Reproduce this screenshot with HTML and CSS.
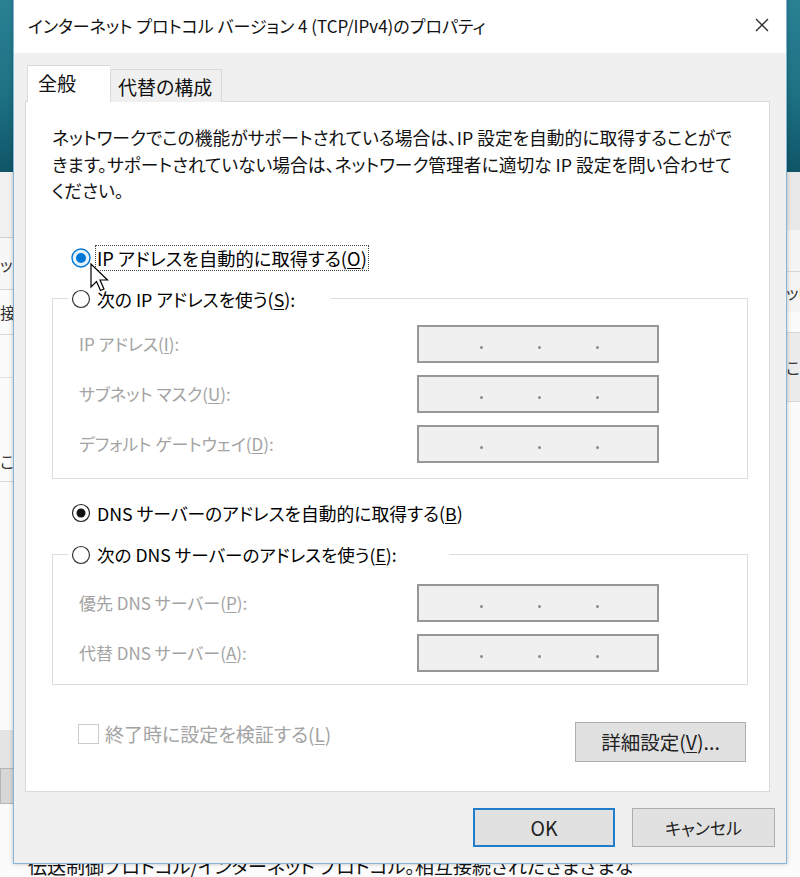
FILE: index.html
```html
<!DOCTYPE html>
<html lang="ja">
<head>
<meta charset="utf-8">
<title>インターネット プロトコル バージョン 4 (TCP/IPv4)のプロパティ</title>
<link rel="stylesheet" href="styles.css">
</head>
<body>
<div class="desktop">
  <div class="wallpaper"></div>
  <div class="backwin">
    <div class="bw-strips">
      <div class="bw-col bw-left">
        <div class="bw-cell c1"></div>
        <div class="bw-cell c2">ッ</div>
        <div class="bw-cell c3">接</div>
        <div class="bw-cell c4"></div>
        <div class="bw-cell c5"></div>
        <div class="bw-cell c6">こ</div>
        <div class="bw-cell c7"></div>
        <div class="bw-cell c8"></div>
        <div class="bw-cell c9"></div>
      </div>
      <div class="bw-col bw-right">
        <div class="bw-cell r1"></div>
        <div class="bw-cell r2"></div>
        <div class="bw-cell r3">ッI</div>
        <div class="bw-cell r4"></div>
        <div class="bw-cell r5">こ</div>
      </div>
    </div>
    <div class="bw-desc">伝送制御プロトコル/インターネット プロトコル。相互接続されたさまざまな</div>
  </div>

  <div class="dialog">
    <div class="titlebar">
      <span class="title">インターネット プロトコル バージョン 4 (TCP/IPv4)のプロパティ</span>
      <span class="close">
        <svg width="14" height="14" viewBox="0 0 14 14"><path d="M1 1 L13 13 M13 1 L1 13" stroke="#2b2b2b" stroke-width="1.3" fill="none"/></svg>
      </span>
    </div>
    <div class="dlg-body">
      <div class="tabs">
        <div class="tab active">全般</div>
        <div class="tab">代替の構成</div>
      </div>
      <div class="panel">
        <p class="desc">ネットワークでこの機能がサポートされている場合は、IP 設定を自動的に取得することがで<br>きます。サポートされていない場合は、ネットワーク管理者に適切な IP 設定を問い合わせて<br>ください。</p>

        <div class="radio-row">
          <svg class="radio" width="20" height="20" viewBox="0 0 20 20"><circle cx="10" cy="10" r="9" fill="#e5f1fb" stroke="#0078d7" stroke-width="1.4"/><circle cx="10" cy="10" r="5" fill="#0078d7"/></svg>
          <span class="focus">IP アドレスを自動的に取得する(<u>O</u>)</span>
        </div>

        <fieldset class="group group-ip">
          <legend class="legend legend-ip">
            <svg class="radio" width="20" height="20" viewBox="0 0 20 20"><circle cx="10" cy="10" r="8.5" fill="#fff" stroke="#333" stroke-width="1.2"/></svg>
            <span>次の IP アドレスを使う(<u>S</u>):</span>
          </legend>
          <div class="fields">
            <span class="flabel">IP アドレス(<u>I</u>):</span>
            <div class="ipbox"><i></i><i></i><i></i></div>
            <span class="flabel">サブネット マスク(<u>U</u>):</span>
            <div class="ipbox"><i></i><i></i><i></i></div>
            <span class="flabel">デフォルト ゲートウェイ(<u>D</u>):</span>
            <div class="ipbox"><i></i><i></i><i></i></div>
          </div>
        </fieldset>

        <div class="radio-row dns-auto">
          <svg class="radio" width="20" height="20" viewBox="0 0 20 20"><circle cx="10" cy="10" r="8.5" fill="#fff" stroke="#222" stroke-width="1.2"/><circle cx="10" cy="10" r="4.5" fill="#111"/></svg>
          <span class="rlabel">DNS サーバーのアドレスを自動的に取得する(<u>B</u>)</span>
        </div>

        <fieldset class="group group-dns">
          <legend class="legend legend-dns">
            <svg class="radio" width="20" height="20" viewBox="0 0 20 20"><circle cx="10" cy="10" r="8.5" fill="#fff" stroke="#333" stroke-width="1.2"/></svg>
            <span>次の DNS サーバーのアドレスを使う(<u>E</u>):</span>
          </legend>
          <div class="fields">
            <span class="flabel">優先 DNS サーバー(<u>P</u>):</span>
            <div class="ipbox"><i></i><i></i><i></i></div>
            <span class="flabel">代替 DNS サーバー(<u>A</u>):</span>
            <div class="ipbox"><i></i><i></i><i></i></div>
          </div>
        </fieldset>

        <div class="bottom-row">
          <div class="check">
            <span class="checkbox"></span>
            <span>終了時に設定を検証する(<u>L</u>)</span>
          </div>
          <div class="btn adv">詳細設定(<u>V</u>)...</div>
        </div>
      </div>
      <div class="footer">
        <div class="btn ok">OK</div>
        <div class="btn cancel">キャンセル</div>
      </div>
    </div>
  </div>

  <svg class="cursor" width="20" height="30" viewBox="0 0 20 30"><path d="M1 1 V24 L6.5 18.5 L10.5 27.5 L14 26 L10 17 H17.5 Z" fill="#fff" stroke="#000" stroke-width="1.2" stroke-linejoin="miter"/></svg>
</div>
</body>
</html>
```

FILE: styles.css
```css
* { box-sizing: border-box; }
html, body { margin: 0; padding: 0; }
body {
  width: 800px;
  height: 877px;
  overflow: hidden;
  font-family: "Noto Sans CJK JP", "Noto Sans", sans-serif;
  font-feature-settings: "palt";
  font-size: 17px;
  color: #000;
}
u { text-decoration: underline; text-underline-offset: 2px; text-decoration-thickness: 1px; }

.desktop {
  position: relative;
  width: 800px;
  height: 877px;
  overflow: hidden;
  background: #fff;
}
.wallpaper {
  height: 172px;
  background: linear-gradient(180deg, #2a8293 0%, #1d7183 55%, #0f5668 100%);
}

/* window behind */
.backwin {
  height: 705px;
  background: #fbfbfb;
  display: flex;
  flex-direction: column;
}
.bw-strips {
  height: 688px;
  display: flex;
  justify-content: space-between;
}
.bw-col {
  width: 14px;
  display: flex;
  flex-direction: column;
  font-size: 16px;
  color: #333;
  overflow: hidden;
}
.bw-right { align-items: flex-end; }
.bw-cell { width: 100%; display: flex; align-items: center; white-space: nowrap; }
.c1 { height: 66px; background: #f1f1f1; border-bottom: 1px solid #cfcfcf; }
.c2 { height: 52px; background: #f7f7f7; border-bottom: 1px solid #d6d6d6; }
.c3 { height: 45px; border-bottom: 1px solid #d6d6d6; }
.c4 { height: 43px; border-bottom: 1px solid #e2e2e2; }
.c5 { height: 62px; }
.c6 { height: 42px; border-bottom: 1px solid #d6d6d6; }
.c7 { height: 248px; }
.c8 { height: 38px; background: #e4e4e4; }
.c9 { height: 36px; background: #d7d7d7; border: 1px solid #b5b5b5; }
.r1 { height: 58px; background: #e9e9e9; }
.r2 { height: 42px; background: #f4f4f4; border-bottom: 1px solid #d6d6d6; }
.r3 { height: 40px; background: #f4f4f4; justify-content: flex-start; }
.r4 { height: 20px; }
.r5 { height: 70px; background: #ececec; border-top: 1px solid #d6d6d6; border-bottom: 1px solid #d6d6d6; }
.bw-desc {
  padding-left: 28px;
  font-size: 19px;
  line-height: 22px;
  white-space: nowrap;
  color: #111;
}

/* dialog */
.dialog {
  position: absolute;
  left: 13px;
  top: -1px;
  width: 774px;
  height: 865px;
  background: #f0f0f0;
  border: 1px solid #86b5da;
  box-shadow: 0 0 4px rgba(0, 0, 0, 0.25);
  display: flex;
  flex-direction: column;
}
.titlebar {
  height: 53px;
  background: #fff;
  display: flex;
  align-items: center;
  justify-content: space-between;
  padding: 0 0 3px 14px;
  flex: none;
}
.title { font-size: 17px; color: #111; white-space: nowrap; }
.close {
  width: 48px;
  height: 40px;
  display: flex;
  align-items: center;
  justify-content: center;
}

.dlg-body {
  flex: 1;
  display: flex;
  flex-direction: column;
  padding: 12px 0 0 11px;
}
.tabs {
  display: flex;
  align-items: flex-end;
  padding-left: 2px;
  height: 37px;
  margin-bottom: -1px;
  position: relative;
  z-index: 1;
}
.tab {
  height: 33px;
  width: 112px;
  padding-left: 7px;
  display: flex;
  align-items: center;
  background: #f0f0f0;
  border: 1px solid #d9d9d9;
  border-bottom: none;
  color: #111;
  font-size: 19px;
}
.tab.active {
  height: 37px;
  width: 83px;
  padding-left: 10px;
  padding-bottom: 4px;
  background: #fff;
  border-right: none;
}
.panel {
  height: 691px;
  margin-right: 16px;
  background: #fff;
  border: 1px solid #d9d9d9;
  padding: 22px 21px 0 26px;
  display: flex;
  flex-direction: column;
  flex: none;
}
.desc {
  margin: 0;
  line-height: 26.5px;
  font-size: 17.75px;
  color: #111;
  white-space: nowrap;
}
.radio-row {
  display: flex;
  align-items: center;
  height: 26px;
  margin-left: 19px;
  margin-top: 41px;
  white-space: nowrap;
}
.radio { flex: none; display: block; }
.radio-row .focus {
  margin-left: 4px;
  padding: 0 1px;
  border: 1px dotted #444;
  line-height: 24px;
  font-size: 18.3px;
}
.rlabel { margin-left: 6px; font-size: 17.8px; }

.group {
  margin: 15px 0 0 0;
  padding: 0;
  border: 1px solid #dcdcdc;
  min-width: 0;
}
.legend {
  display: flex;
  align-items: center;
  height: 26px;
  margin-left: 15px;
  padding: 0 0 0 3px;
  white-space: nowrap;
  background: #fff;
}
.legend span { margin-left: 6px; }
.legend-ip { width: 263px; font-size: 17.8px; }
.legend-dns { width: 381px; font-size: 17.6px; }
.fields {
  display: grid;
  grid-template-columns: 338px 242px;
  row-gap: 12px;
  align-items: center;
  padding: 13px 0 15px 26px;
}
.group-dns .fields { padding: 16px 0 12px 26px; }
.flabel { color: #a3a3a3; white-space: nowrap; }
.ipbox {
  height: 38px;
  background: #f0f0f0;
  border: 2px solid #979797;
  display: flex;
  align-items: flex-end;
  padding: 0 0 12px 61px;
  gap: 55px;
}
.ipbox i {
  width: 3px;
  height: 3px;
  border-radius: 50%;
  background: #8a8a8a;
}
.dns-auto { margin-top: 21px; }
.group-dns { margin-top: 16px; }

.bottom-row {
  display: flex;
  justify-content: space-between;
  align-items: flex-start;
  margin-top: 37px;
  padding-right: 2px;
}
.check {
  display: flex;
  align-items: center;
  height: 24px;
  margin-left: 26px;
  color: #a3a3a3;
  white-space: nowrap;
  font-size: 19px;
}
.checkbox {
  width: 21px;
  height: 20px;
  border: 1px solid #cccccc;
  background: #fff;
  margin-right: 6px;
}
.btn {
  height: 40px;
  background: #e1e1e1;
  border: 1px solid #adadad;
  display: flex;
  align-items: center;
  justify-content: center;
  color: #222;
  white-space: nowrap;
}
.adv { width: 171px; font-size: 19.5px; }
.footer {
  display: flex;
  justify-content: flex-end;
  gap: 17px;
  padding: 16px 11px 0 0;
}
.ok { width: 142px; height: 39px; border: 2px solid #1f7dcc; font-size: 19.5px; }
.cancel { width: 143px; height: 39px; }

.cursor {
  position: absolute;
  left: 90px;
  top: 263px;
}
```
